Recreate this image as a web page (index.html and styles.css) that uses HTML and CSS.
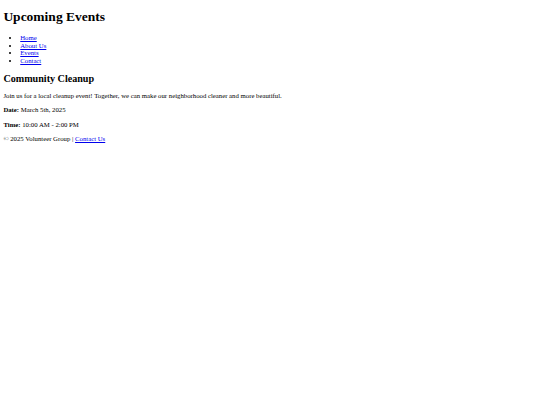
FILE: index.html
```html
<!DOCTYPE html>
<html lang="en">
<head>
<meta charset="utf-8">
<title>Upcoming Events</title>
<link rel="stylesheet" href="styles.css">
</head>
<body>
<header>
<h1>Upcoming Events</h1>
<nav>
<ul>
<li><a href="#">Home</a></li>
<li><a href="#">About Us</a></li>
<li><a href="#">Events</a></li>
<li><a href="#">Contact</a></li>
</ul>
</nav>
</header>
<main>
<section class="event">
<h2>Community Cleanup</h2>
<p>Join us for a local cleanup event! Together, we can make our neighborhood cleaner and more beautiful.</p>
<p><strong>Date:</strong> March 5th, 2025</p>
<p><strong>Time:</strong> 10:00 AM - 2:00 PM</p>
</section>
</main>
<footer>
<p>&copy; 2025 Volunteer Group | <a href="#">Contact Us</a></p>
</footer>
</body>
</html>
```
FILE: styles.css
```css
html, body {
  background: #fff;
}
body {
  margin: 3.375px;
  font-family: "Liberation Serif", "Times New Roman", serif;
  font-size: 6.75px;
  line-height: 1.15;
  color: #000;
}
h1 {
  font-size: 2em;
  margin: 6px 0 9px;
}
h2 {
  font-size: 1.5em;
  margin: 8.4px 0 7.4px;
}
p {
  margin: 6.4px 0;
}
ul {
  margin: 6.75px 0;
  padding-left: 2.5em;
}
a {
  color: #0000ee;
}
```
